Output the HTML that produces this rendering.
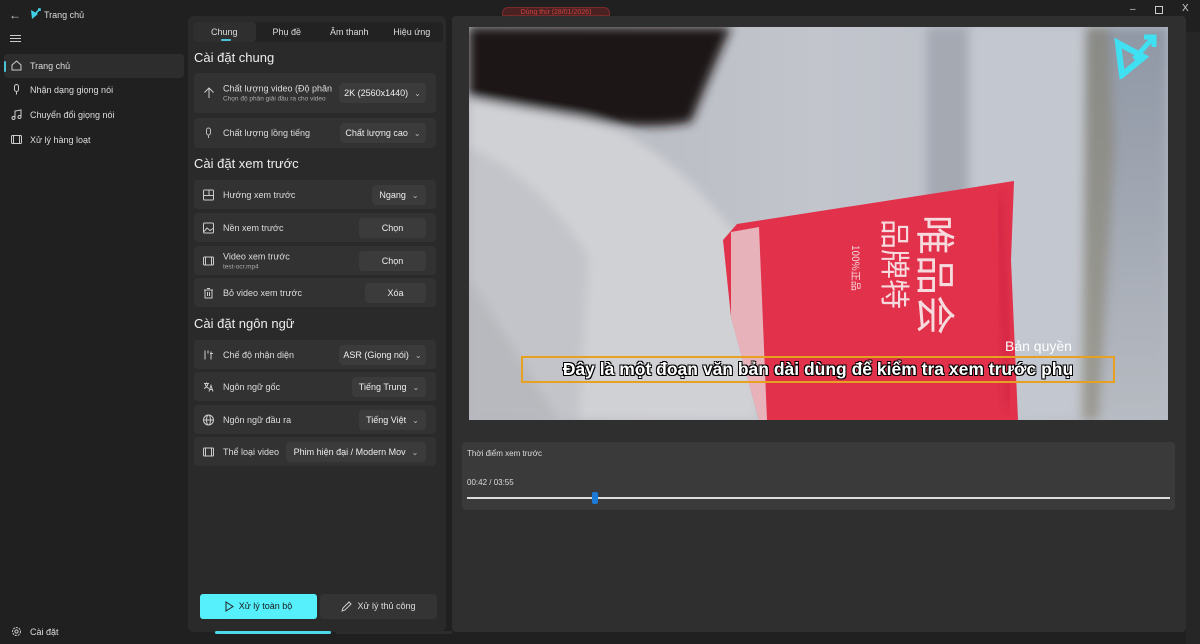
<!DOCTYPE html>
<html><head><meta charset="utf-8"><style>
*{box-sizing:border-box;margin:0;padding:0}
body{width:1200px;height:644px;background:#202020;font-family:"Liberation Sans","Noto Sans CJK SC",sans-serif;color:#e8e8e8;position:relative;overflow:hidden;font-size:9px}
.abs{position:absolute}
.nav{position:absolute;left:4px;width:180px;height:24px;display:flex;align-items:center;padding-left:26px;font-size:9px;color:#ddd}
.nav svg{position:absolute;left:7px;top:6px}
.panel{position:absolute;left:188px;top:16px;width:258px;height:616px;background:#2a2a2a;border-radius:6px}
.tabs{position:absolute;left:5px;top:6px;width:250px;height:20px;background:#222;border-radius:4px;display:flex}
.tabs div{flex:1;text-align:center;line-height:20px;font-size:9px;color:#ddd}
.tabs .on{background:#2f2f2f;border-radius:4px;position:relative}
.tabs .on:after{content:"";position:absolute;left:28px;bottom:1px;width:10px;height:2px;background:#4cc2d4;border-radius:1px}
h3{position:absolute;left:6px;font-weight:normal;font-size:13px;color:#eee}
.row{position:absolute;left:6px;width:242px;background:#323232;border-radius:4px;font-size:9px;color:#ddd}
.row .t{position:absolute;left:29px;top:50%;transform:translateY(-50%)}
.row .t small{display:block;font-size:6.5px;color:#aaa;margin-top:2px}
.row svg{position:absolute;left:9px;top:50%;transform:translateY(-50%)}
.btn{position:absolute;right:10px;top:50%;transform:translateY(-50%);height:20px;background:#3b3b3b;border-radius:4px;line-height:20px;text-align:center;font-size:9px;color:#eee}
.btn i{font-style:normal;font-size:8px;color:#bbb;margin-left:6px}
</style></head><body>
<div class="abs" style="left:9px;top:8px;font-size:12px;color:#ccc">←</div>
<svg class="abs" style="left:29px;top:8px" width="12" height="12" viewBox="0 0 12 12"><path d="M2 2 L9 6 L3 11 Z" fill="#3fd0e6"/><path d="M6 6 L11 1 M9 1 H11 V3" stroke="#3fd0e6" stroke-width="1.6" fill="none"/></svg>
<div class="abs" style="left:44px;top:10px;font-size:9px;color:#ddd">Trang chủ</div>
<div class="abs" style="left:10px;top:35px;width:11px;height:1px;background:#ccc;box-shadow:0 3px 0 #ccc,0 6px 0 #ccc"></div>
<div class="abs" style="left:502px;top:7px;width:108px;height:9px;background:#4a2222;border:1px solid #7a2a2a;border-radius:6px 6px 0 0;color:#d04040;font-size:7px;text-align:center;line-height:10px;overflow:hidden">Dùng thử (28/01/2026)</div>
<div class="abs" style="left:1130px;top:4px;font-size:10px;color:#ccc">–</div>
<div class="abs" style="left:1155px;top:6px;width:8px;height:8px;border:1px solid #ccc"></div>
<div class="abs" style="left:1182px;top:3px;font-size:10px;color:#ccc">X</div>

<div class="nav" style="top:54px;background:#2d2d2d;border-radius:4px">
<div class="abs" style="left:0;top:7px;width:2px;height:11px;background:#4cc2d4;border-radius:1px"></div>
<svg width="11" height="11" viewBox="0 0 11 11"><path d="M1 5 L5.5 1 L10 5 V10 H1 Z" stroke="#ccc" fill="none"/></svg>Trang chủ</div>
<div class="nav" style="top:78px"><svg width="11" height="11" viewBox="0 0 11 11"><rect x="3.5" y="0.5" width="4" height="7" rx="2" stroke="#ccc" fill="none"/><path d="M5.5 8 V10.5" stroke="#ccc"/></svg>Nhận dạng giọng nói</div>
<div class="nav" style="top:103px"><svg width="11" height="11" viewBox="0 0 11 11"><path d="M4 9 V2 L10 1 V8" stroke="#ccc" fill="none"/><circle cx="2.5" cy="9" r="1.5" stroke="#ccc" fill="none"/><circle cx="8.5" cy="8" r="1.5" stroke="#ccc" fill="none"/></svg>Chuyển đổi giọng nói</div>
<div class="nav" style="top:128px"><svg width="11" height="11" viewBox="0 0 11 11"><rect x="0.5" y="1.5" width="10" height="8" rx="1" stroke="#ccc" fill="none"/><path d="M2.5 1.5 V9.5 M8.5 1.5 V9.5" stroke="#ccc"/></svg>Xử lý hàng loạt</div>
<div class="nav" style="top:620px"><svg width="11" height="11" viewBox="0 0 11 11"><circle cx="5.5" cy="5.5" r="4" stroke="#ccc" stroke-dasharray="2 1" fill="none"/><circle cx="5.5" cy="5.5" r="1.6" stroke="#ccc" fill="none"/></svg>Cài đặt</div>

<div class="panel">
<div class="tabs"><div class="on">Chung</div><div>Phụ đề</div><div>Âm thanh</div><div>Hiệu ứng</div></div>
<h3 style="top:34px">Cài đặt chung</h3>
<div class="row" style="top:57px;height:40px"><svg width="12" height="12" viewBox="0 0 12 12"><path d="M6 11 V1 M1.5 5.5 L6 1 L10.5 5.5" stroke="#ccc" fill="none"/></svg><div class="t">Chất lượng video (Độ phân<small>Chọn độ phân giải đầu ra cho video</small></div><div class="btn" style="width:87px">2K (2560x1440)<i>⌄</i></div></div>
<div class="row" style="top:102px;height:30px"><svg width="11" height="11" viewBox="0 0 11 11"><rect x="3.5" y="0.5" width="4" height="7" rx="2" stroke="#bbb" fill="none"/><path d="M5.5 8 V10.5" stroke="#bbb"/></svg><div class="t">Chất lượng lồng tiếng</div><div class="btn" style="width:86px">Chất lượng cao<i>⌄</i></div></div>
<h3 style="top:140px">Cài đặt xem trước</h3>
<div class="row" style="top:164px;height:29px"><svg width="11" height="11" viewBox="0 0 11 11"><rect x="0.5" y="0.5" width="10" height="10" rx="1" stroke="#ccc" fill="none"/><path d="M0.5 6 H10.5 M6 0.5 V6" stroke="#ccc"/></svg><div class="t">Hướng xem trước</div><div class="btn" style="width:54px">Ngang<i>⌄</i></div></div>
<div class="row" style="top:197px;height:29px"><svg width="11" height="11" viewBox="0 0 11 11"><rect x="0.5" y="0.5" width="10" height="10" rx="1" stroke="#ccc" fill="none"/><path d="M1 9 L4 5.5 L7 8 L10 6" stroke="#ccc" fill="none"/></svg><div class="t">Nền xem trước</div><div class="btn" style="width:67px">Chọn</div></div>
<div class="row" style="top:230px;height:29px"><svg width="11" height="11" viewBox="0 0 11 11"><rect x="0.5" y="1.5" width="10" height="8" rx="1" stroke="#ccc" fill="none"/><path d="M2.5 1.5 V9.5 M8.5 1.5 V9.5" stroke="#ccc"/></svg><div class="t">Video xem trước<small>test-ocr.mp4</small></div><div class="btn" style="width:67px">Chọn</div></div>
<div class="row" style="top:262px;height:29px"><svg width="11" height="11" viewBox="0 0 11 11"><path d="M1 2.5 H10 M2 2.5 V10.5 H9 V2.5 M4 1 H7 M4.5 4.5 V8.5 M6.5 4.5 V8.5" stroke="#ccc" fill="none"/></svg><div class="t">Bỏ video xem trước</div><div class="btn" style="width:61px">Xóa</div></div>
<h3 style="top:300px">Cài đặt ngôn ngữ</h3>
<div class="row" style="top:324px;height:29px"><svg width="11" height="11" viewBox="0 0 11 11"><path d="M2 1 V10 M5 1 V4 M8 2 V10 M7 4 H10" stroke="#ccc" fill="none"/></svg><div class="t">Chế độ nhận diện</div><div class="btn" style="width:87px">ASR (Giọng nói)<i>⌄</i></div></div>
<div class="row" style="top:356px;height:29px"><svg width="11" height="11" viewBox="0 0 11 11"><path d="M1 2 H6 M3.5 1 V2 M2 2 Q3 6 6 7 M5 2 Q4 6 1 7 M6 10 L8 4 L10 10 M7 8 H9" stroke="#ccc" fill="none"/></svg><div class="t">Ngôn ngữ gốc</div><div class="btn" style="width:74px">Tiếng Trung<i>⌄</i></div></div>
<div class="row" style="top:389px;height:29px"><svg width="11" height="11" viewBox="0 0 11 11"><circle cx="5.5" cy="5.5" r="5" stroke="#ccc" fill="none"/><ellipse cx="5.5" cy="5.5" rx="2" ry="5" stroke="#ccc" fill="none"/><path d="M0.5 5.5 H10.5" stroke="#ccc"/></svg><div class="t">Ngôn ngữ đầu ra</div><div class="btn" style="width:67px">Tiếng Việt<i>⌄</i></div></div>
<div class="row" style="top:421px;height:29px"><svg width="11" height="11" viewBox="0 0 11 11"><rect x="0.5" y="1.5" width="10" height="8" rx="1" stroke="#ccc" fill="none"/><path d="M2.5 1.5 V9.5 M8.5 1.5 V9.5" stroke="#ccc"/></svg><div class="t">Thể loại video</div><div class="btn" style="width:140px;overflow:hidden;white-space:nowrap">Phim hiện đại / Modern Mov<i>⌄</i></div></div>
<div class="abs" style="left:12px;top:578px;width:117px;height:25px;background:#56f0fc;border-radius:3px;color:#1a1a1a;font-size:9px;line-height:25px;text-align:center">
<svg style="vertical-align:middle;margin-right:5px" width="9" height="11" viewBox="0 0 9 11"><path d="M1 1 L8 5.5 L1 10 Z" stroke="#222" fill="none"/></svg>Xử lý toàn bộ</div>
<div class="abs" style="left:132px;top:578px;width:117px;height:25px;background:#343434;border-radius:3px;color:#ddd;font-size:9px;line-height:25px;text-align:center">
<svg style="vertical-align:middle;margin-right:5px" width="11" height="11" viewBox="0 0 11 11"><path d="M1 10 L2 7 L8 1 L10 3 L4 9 Z" stroke="#ccc" fill="none"/></svg>Xử lý thủ công</div>
</div>
<div class="abs" style="left:215px;top:631px;width:116px;height:3px;background:#4cd8e6;border-radius:2px"></div>
<div class="abs" style="left:336px;top:631px;width:116px;height:3px;background:#2c2c2c"></div>

<div class="abs" style="left:452px;top:16px;width:734px;height:616px;background:#2f2f2f;border-radius:4px"></div>
<div class="abs" style="left:1186px;top:32px;width:14px;height:612px;background:#262626"></div>
<div class="abs" style="left:469px;top:27px;width:699px;height:393px;overflow:hidden">
<svg width="699" height="393" viewBox="0 0 699 393">
<defs>
<filter id="b"><feGaussianBlur stdDeviation="5"/></filter>
<linearGradient id="wall" x1="0" x2="1"><stop offset="0" stop-color="#b4b7be"/><stop offset="0.5" stop-color="#c2c5cc"/><stop offset="1" stop-color="#b7bcc6"/></linearGradient>
<linearGradient id="rt" x1="0" y1="0" x2="0" y2="1"><stop offset="0" stop-color="#8f97a5"/><stop offset="1" stop-color="#b7bbc2"/></linearGradient>
</defs>
<rect width="699" height="393" fill="url(#wall)"/>
<g filter="url(#b)">
<rect x="458" y="0" width="42" height="393" fill="#a4a9b2"/>
<rect x="500" y="0" width="116" height="393" fill="#c3c7cf"/>
<rect x="616" y="0" width="83" height="393" fill="url(#rt)"/>
<path d="M616 0 L640 0 L646 120 L630 393 L612 393 Z" fill="#857f6c" opacity="0.55"/>
<path d="M0 0 H262 Q240 50 222 95 Q170 105 110 90 Q50 80 0 70 Z" fill="#1c1819"/>
<path d="M0 72 Q60 82 120 92 Q180 110 235 170 L270 210 L290 393 H0 Z" fill="#d0d1d5"/>
<path d="M0 120 Q70 150 120 230 L110 393 H0 Z" fill="#c3c4c9"/>
<path d="M0 250 L90 393 H0 Z" fill="#b8b9be"/>
</g>
<polygon points="254,213 268,197 545,154 542,233 549,393 290,393 262,290" fill="#e2314b"/>
<polygon points="262,205 290,200 298,393 290,393 262,290" fill="#eadde0" opacity="0.75"/>
<path d="M530 170 L540 380" stroke="#b81c3a" stroke-width="6" opacity="0.5" filter="url(#b)"/>
<text x="452" y="188" fill="#f6dadd" font-size="40" font-family="Noto Sans CJK SC" transform="rotate(90 452 188)">唯品会</text>
<text x="415" y="192" fill="#f6dadd" font-size="30" font-family="Noto Sans CJK SC" transform="rotate(90 415 192)">品牌特</text>
<text x="383" y="218" fill="#f6dadd" font-size="10" font-family="Noto Sans CJK SC" transform="rotate(90 383 218)">100%正品</text>
</svg>
<svg class="abs" style="left:645px;top:6px" width="44" height="46" viewBox="0 0 44 46"><path d="M4 10 L30 24 L8 42 Z" fill="none" stroke="#3fe0f2" stroke-width="6"/><path d="M20 26 L38 6 M30 4 H40 V14" stroke="#3fe0f2" stroke-width="5" fill="none"/></svg>
<div class="abs" style="left:536px;top:311px;font-size:14px;color:#fff">Bản quyền</div>
<div class="abs" style="left:52px;top:329px;width:594px;height:27px;border:2px solid #e8a020;text-align:center;font-size:17.5px;font-weight:bold;color:#fff;line-height:23px;white-space:nowrap;text-shadow:-1px -1px 0 #000,1px -1px 0 #000,-1px 1px 0 #000,1px 1px 0 #000">Đây là một đoạn văn bản dài dùng để kiểm tra xem trước phụ</div>
</div>
<div class="abs" style="left:462px;top:442px;width:713px;height:68px;background:#3a3a3a;border-radius:4px">
<div class="abs" style="left:5px;top:7px;font-size:8px;color:#ddd">Thời điểm xem trước</div>
<div class="abs" style="left:5px;top:36px;font-size:8px;color:#ddd">00:42 / 03:55</div>
<div class="abs" style="left:5px;top:55px;width:703px;height:2px;background:#ddd"></div>
<div class="abs" style="left:130px;top:50px;width:6px;height:12px;background:#1a7ad6;border-radius:2px"></div>
</div>
</body></html>
